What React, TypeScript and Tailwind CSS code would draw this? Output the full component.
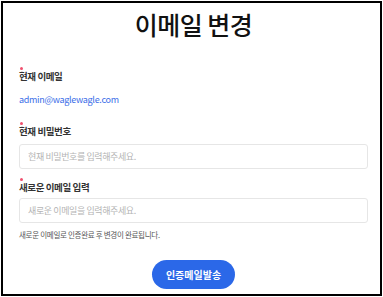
import React from "react";

const font = { fontFamily: '"Noto Sans CJK KR", "Noto Sans", sans-serif' };

function Dot() {
  return <div className="w-[3px] h-[3px] rounded-full bg-[#f0506e] ml-px" />;
}

export default function App() {
  return (
    <div className="w-[383px] h-[297px] bg-white p-px" style={font}>
      <div className="w-[381px] h-[295px] border-2 border-black pl-4 pr-3 flex flex-col">
        <h1 className="text-center text-[25px] leading-[27px] font-medium tracking-[-0.5px] text-[#111] mt-2">
          이메일 변경
        </h1>

        <div className="mt-[29px]">
          <Dot />
          <div className="text-[9.5px] leading-[12px] font-bold tracking-[-0.4px] text-[#333]">현재 이메일</div>
        </div>
        <div className="mt-3 text-[9px] leading-[12px] tracking-[-0.3px] text-[#3b6ee8]">admin@waglewagle.com</div>

        <div className="mt-4">
          <Dot />
          <div className="text-[9.5px] leading-[12px] font-bold tracking-[-0.4px] text-[#333]">현재 비밀번호</div>
        </div>
        <input
          className="mt-[7px] h-[25px] w-full rounded-[3px] border border-[#e6e6e6] px-2 text-[9px] tracking-[-0.4px] text-[#333] placeholder:text-[#b4b4b4] outline-none"
          placeholder="현재 비밀번호를 입력해주세요."
          type="password"
          style={font}
        />

        <div className="mt-[9px]">
          <Dot />
          <div className="text-[9.5px] leading-[12px] font-bold tracking-[-0.4px] text-[#333]">새로운 이메일 입력</div>
        </div>
        <input
          className="mt-[5px] h-[25px] w-full rounded-[3px] border border-[#e6e6e6] px-2 text-[9px] tracking-[-0.4px] text-[#333] placeholder:text-[#b4b4b4] outline-none"
          placeholder="새로운 이메일을 입력해주세요."
          style={font}
        />

        <div className="mt-[6px] text-[7.5px] leading-[12px] tracking-[-0.3px] text-[#555]">
          새로운 이메일로 인증완료 후 변경이 완료됩니다.
        </div>

        <div className="mt-[19px] flex justify-center">
          <button
            className="w-[83px] h-[29px] rounded-full bg-[#2b68e8] text-white text-[10px] font-bold"
            style={font}
          >
            인증메일발송
          </button>
        </div>
      </div>
    </div>
  );
}
